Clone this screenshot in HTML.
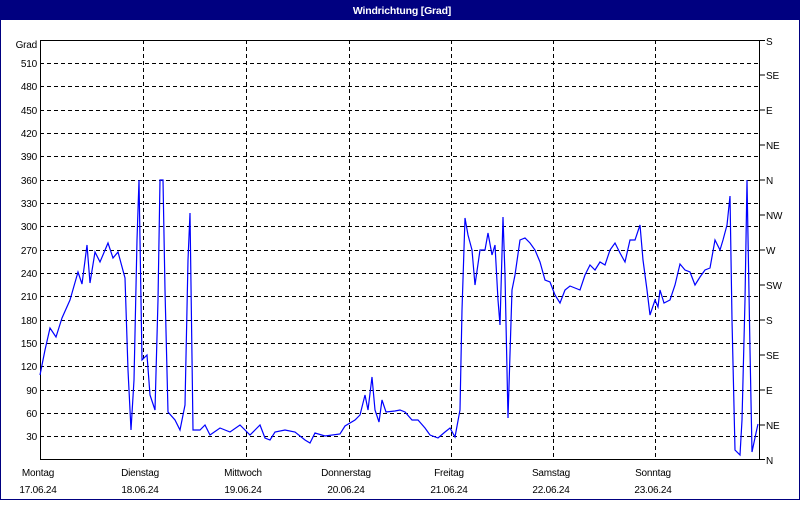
<!DOCTYPE html><html><head><style>
body{margin:0;width:800px;height:500px;overflow:hidden;background:#fff;font-family:"Liberation Sans",sans-serif}
</style></head><body>
<svg width="800" height="500" xmlns="http://www.w3.org/2000/svg" font-family="Liberation Sans, sans-serif" font-size="10" letter-spacing="-0.2">
<rect x="0" y="0" width="800" height="500" fill="#fff"/>
<rect x="0" y="0" width="800" height="20" fill="#000080"/>
<rect x="0.5" y="0.5" width="799" height="499" fill="none" stroke="#000080"/>
<text x="402" y="14" fill="#fff" font-weight="bold" font-size="10.5" text-anchor="middle">Windrichtung [Grad]</text>
<g stroke="#000" stroke-dasharray="4,3" stroke-width="1">
<path d="M40 63.5H760M40 86.5H760M40 110.5H760M40 133.5H760M40 156.5H760M40 180.5H760M40 203.5H760M40 226.5H760M40 250.5H760M40 273.5H760M40 296.5H760M40 320.5H760M40 343.5H760M40 366.5H760M40 390.5H760M40 413.5H760M40 436.5H760"/>
<path d="M143.5 40V460M246.5 40V460M349.5 40V460M451.5 40V460M553.5 40V460M655.5 40V460"/>
</g>
<rect x="40.5" y="40.5" width="719" height="419" fill="none" stroke="#000"/>
<path d="M760 40.5h5M760 75h5M760 110h5M760 145h5M760 180h5M760 215h5M760 250h5M760 285h5M760 320h5M760 355h5M760 390h5M760 425h5M760 459.5h5" stroke="#000"/>
<g text-anchor="end">
<text x="37" y="48">Grad</text>
<text x="37" y="67">510</text><text x="37" y="90">480</text><text x="37" y="114">450</text><text x="37" y="137">420</text><text x="37" y="160">390</text><text x="37" y="184">360</text><text x="37" y="207">330</text><text x="37" y="230">300</text><text x="37" y="254">270</text><text x="37" y="277">240</text><text x="37" y="300">210</text><text x="37" y="324">180</text><text x="37" y="347">150</text><text x="37" y="370">120</text><text x="37" y="394">90</text><text x="37" y="417">60</text><text x="37" y="440">30</text>
</g>
<g>
<text x="766" y="45">S</text><text x="766" y="79">SE</text><text x="766" y="114">E</text><text x="766" y="149">NE</text><text x="766" y="184">N</text><text x="766" y="219">NW</text><text x="766" y="254">W</text><text x="766" y="289">SW</text><text x="766" y="324">S</text><text x="766" y="359">SE</text><text x="766" y="394">E</text><text x="766" y="429">NE</text><text x="766" y="464">N</text>
</g>
<g text-anchor="middle">
<text x="38" y="476">Montag</text><text x="38" y="493">17.06.24</text>
<text x="140" y="476">Dienstag</text><text x="140" y="493">18.06.24</text>
<text x="243" y="476">Mittwoch</text><text x="243" y="493">19.06.24</text>
<text x="346" y="476">Donnerstag</text><text x="346" y="493">20.06.24</text>
<text x="449" y="476">Freitag</text><text x="449" y="493">21.06.24</text>
<text x="551" y="476">Samstag</text><text x="551" y="493">22.06.24</text>
<text x="653" y="476">Sonntag</text><text x="653" y="493">23.06.24</text>
</g>
<polyline fill="none" stroke="#0000ff" stroke-width="1.2" points="40,375 45,350 50,328 56,337 62,318 70,300 78,272 82,284 87,245 90,283 95,252 100,262 108,243 113,258 118,252 125,278 128,370 131,430 134,380 137,240 139,180 142,360 147,355 150,395 155,410 158,300 160,180 163,180 165,290 168,412 175,420 180,430 185,405 188,260 190,213 193,430 200,430 205,425 210,435 220,428 230,432 240,425 250,435 255,430 260,425 265,438 270,440 275,432 285,430 295,432 305,440 310,443 315,433 325,436 340,434 345,426 355,420 360,415 365,395 368,410 372,377 375,410 379,422 382,400 386,412 395,411 400,410 405,412 412,420 418,420 425,428 430,435 438,438 445,432 450,428 455,437 460,410 462,310 465,218 468,235 472,250 475,285 480,250 485,250 488,233 492,255 495,245 498,300 500,325 503,217 505,275 508,418 512,290 515,275 520,240 525,238 530,243 535,250 540,262 545,280 550,282 555,295 560,303 565,290 570,286 575,288 580,290 585,275 590,265 595,270 600,262 605,265 610,250 615,243 620,253 625,262 630,240 635,240 640,225 643,260 647,290 650,315 655,300 658,307 660,290 664,303 670,300 675,285 680,264 685,270 690,272 695,285 700,277 705,270 710,268 715,240 720,250 723,240 727,225 730,196 732,320 735,450 740,455 742,420 745,300 747,180 750,350 752,452 756,433 758,424"/>
</svg>
</body></html>
